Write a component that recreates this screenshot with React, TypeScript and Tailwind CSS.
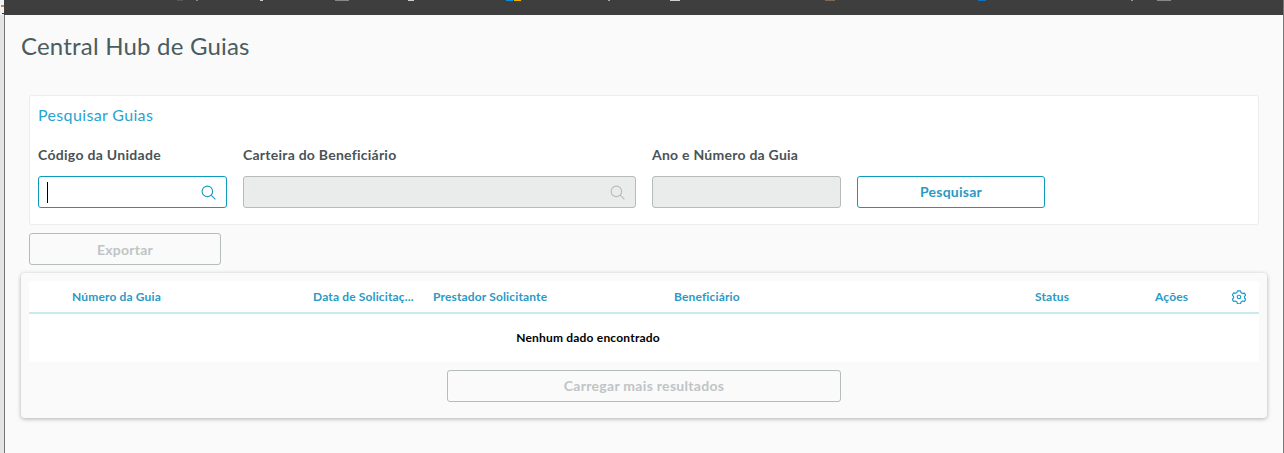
import React from "react";

const Search = ({ className }: { className: string }) => (
  <svg viewBox="0 0 16 16" fill="none" stroke="currentColor" strokeWidth="1.2" className={className}>
    <circle cx="6.8" cy="6.8" r="5.6" />
    <path d="M10.8 10.8 L15.4 15.4" />
  </svg>
);

const Gear = () => (
  <svg viewBox="0 0 24 24" fill="none" stroke="currentColor" strokeWidth="2" strokeLinejoin="round" className="h-[14px] w-[14px] text-[#1a9ac9]">
    <path d="M9.5 2.5h5l1 3 2.8 1.6 3.1-.7 2 3.6-2.1 2.4v2.2l2.1 2.4-2 3.6-3.1-.7-2.8 1.6-1 3h-5l-1-3-2.8-1.6-3.1.7-2-3.6 2.1-2.4v-2.2L.6 9.6l2-3.6 3.1.7 2.8-1.6z" transform="translate(0 -1)" />
    <circle cx="12" cy="12" r="3" />
  </svg>
);

const Bit = ({ w, ml, c }: { w: number; ml: number; c: string }) => (
  <span className="h-[1px] shrink-0" style={{ width: w, marginLeft: ml, backgroundColor: c }} />
);

export default function App() {
  return (
    <div className="flex h-[453px] w-full flex-col overflow-hidden bg-[#fafafa] font-['Lato','Noto_Sans',sans-serif]">
      <div className="flex h-[15px] shrink-0">
        <div className="flex w-1 shrink-0 flex-col items-end bg-[#f2f2f2] pt-[5px]">
          <span className="h-[2px] w-[3px] bg-[#c98a3a]" />
          <span className="mt-[6px] h-[1px] w-[2px] bg-[#333333]" />
        </div>
        <div className="flex min-w-0 flex-1 items-start bg-[#3e3e3e]">
          <Bit w={6} ml={173} c="#555555" />
          <Bit w={2} ml={13} c="#888888" />
          <Bit w={3} ml={62} c="#cccccc" />
          <Bit w={14} ml={72} c="#888888" />
          <Bit w={6} ml={59} c="#cccccc" />
          <Bit w={7} ml={92} c="#0a90e0" />
          <Bit w={7} ml={1} c="#f0b000" />
          <Bit w={2} ml={87} c="#aaaaaa" />
          <Bit w={10} ml={60} c="#cfcfcf" />
          <Bit w={10} ml={145} c="#7a6a55" />
          <Bit w={8} ml={143} c="#1070c0" />
          <Bit w={2} ml={145} c="#999999" />
          <Bit w={14} ml={24} c="#888888" />
        </div>
        <div className="w-px shrink-0 bg-[#777777]" />
      </div>
      <div className="flex min-h-0 flex-1">
        <div className="w-[5px] shrink-0 border-r border-[#777777] bg-[#e4e4e4]" />
        <main className="min-w-0 flex-1">
          <h1 className="ml-4 mt-[16px] h-[64px] text-[24px] font-normal leading-[30px] tracking-[0.2px] text-[#4a5c60]">Central Hub de Guias</h1>
          <section className="ml-6 mr-[24px] h-[130px] rounded-[3px] border border-[#eceeee] bg-white px-2 pt-[9px]">
            <h2 className="text-[16px] leading-5 tracking-[0.35px] text-[#29a3cf]">Pesquisar Guias</h2>
            <div className="mt-5 flex">
              <div className="w-[189px]">
                <div className="text-[14px] font-bold leading-5 tracking-[0.3px] text-[#4a5356]">Código da Unidade</div>
                <div className="mt-[11px] flex h-8 items-center justify-between rounded-[3px] border border-[#0c9abe] bg-white pl-2 pr-[10px] text-[#1a9ac9]">
                  <span className="h-[21px] w-px bg-black" />
                  <Search className="h-[15px] w-[15px]" />
                </div>
              </div>
              <div className="ml-4 w-[393px]">
                <div className="text-[14px] font-bold leading-5 tracking-[0.25px] text-[#4a5356]">Carteira do Beneficiário</div>
                <div className="mt-[11px] flex h-8 items-center justify-end rounded-[3px] border border-[#b6bbbb] bg-[#eaecec] pr-[10px] text-[#b6bbbb]">
                  <Search className="h-[15px] w-[15px]" />
                </div>
              </div>
              <div className="ml-4 w-[189px]">
                <div className="text-[14px] font-bold leading-5 tracking-[0.25px] text-[#4a5356]">Ano e Número da Guia</div>
                <div className="mt-[11px] h-8 rounded-[3px] border border-[#b6bbbb] bg-[#eaecec]" />
              </div>
              <button className="ml-4 mt-[31px] h-8 w-[188px] rounded-[3px] border border-[#0c9abe] bg-white pb-[2px] text-[14px] font-bold tracking-[0.25px] text-[#2a9ac4]">Pesquisar</button>
            </div>
          </section>
          <button className="ml-6 mt-2 block h-8 w-[192px] rounded-[3px] border border-[#b6bbbb] bg-[#fafafa] text-[14px] font-bold tracking-[0.25px] text-[#c0c4c6]">Exportar</button>
          <section className="ml-4 mr-4 mt-2 h-[145px] rounded-[4px] bg-[#fafafa] px-2 pt-2 shadow-[0_1px_4px_rgba(0,0,0,0.3)]">
            <div className="flex h-[33px] items-center border-b-2 border-[#cbe9f2] bg-white text-[12px] font-bold tracking-[0.15px] text-[#2a9ac4]">
              <span className="ml-[43px] w-[241px]">Número da Guia</span>
              <span className="w-[120px] whitespace-nowrap">Data de Solicitaç...</span>
              <span className="w-[241px]">Prestador Solicitante</span>
              <span className="w-[361px]">Beneficiário</span>
              <span className="w-[120px]">Status</span>
              <span className="w-[78px]">Ações</span>
              <span className="-ml-px"><Gear /></span>
            </div>
            <div className="flex h-[48px] items-center justify-center bg-white pr-[112px] text-[12px] font-bold tracking-[0.2px] text-black">Nenhum dado encontrado</div>
            <button className="mx-auto mt-2 block h-8 w-[394px] rounded-[3px] border border-[#b6bbbb] bg-[#fafafa] pb-[1px] text-[14px] font-bold tracking-[0.3px] text-[#c0c4c6]">Carregar mais resultados</button>
          </section>
        </main>
        <div className="w-px shrink-0 bg-[#777777]" />
      </div>
    </div>
  );
}
